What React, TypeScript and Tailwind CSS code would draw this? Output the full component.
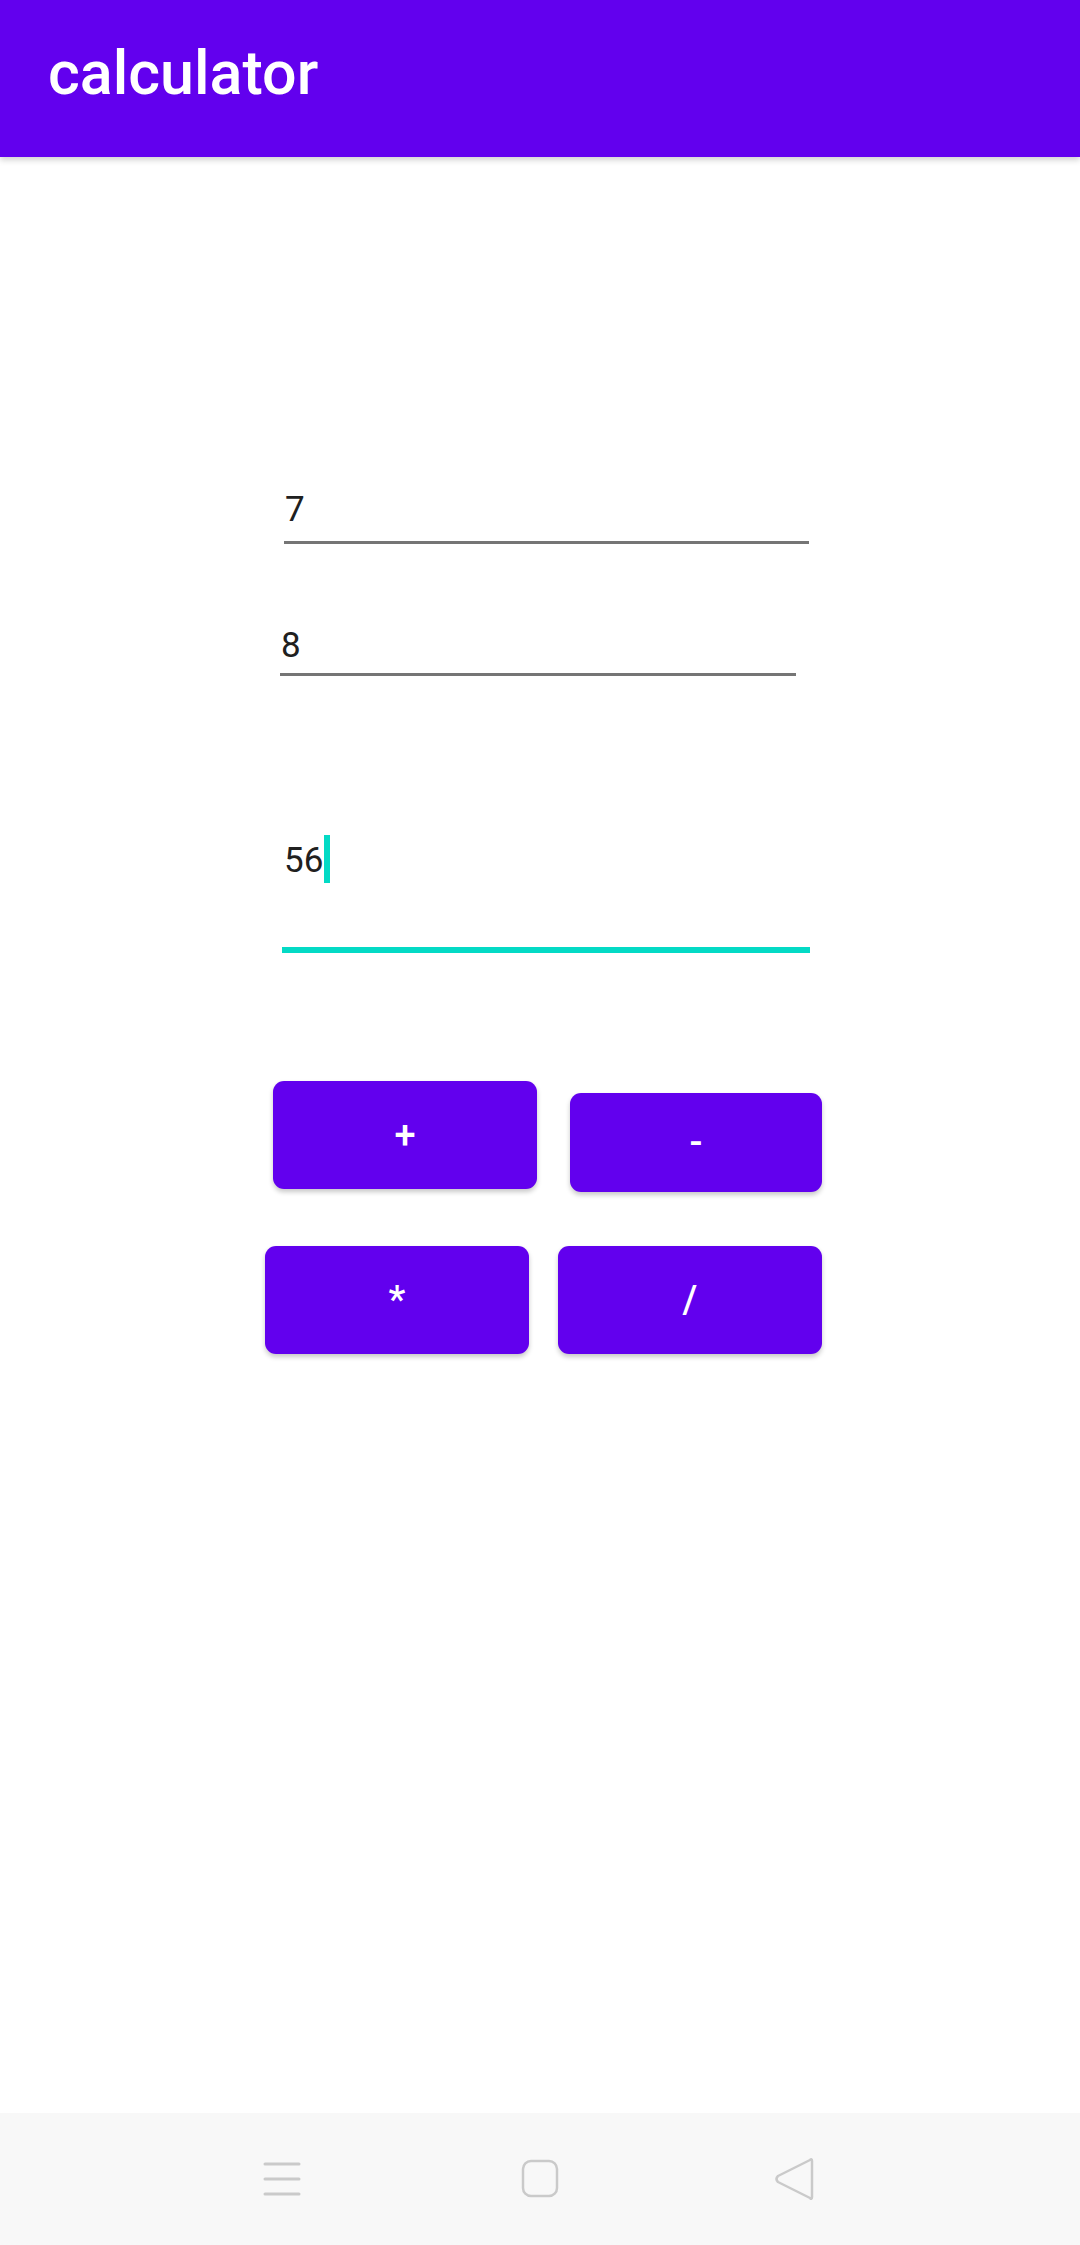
import React from "react";

export default function App() {
  const font = { fontFamily: "Roboto, 'Noto Sans', sans-serif" };
  return (
    <div className="w-[1080px] h-[2245px] bg-white flex flex-col overflow-hidden" style={font}>
      <header className="h-[157px] shrink-0 bg-[#6200ee] shadow-[0_3px_6px_rgba(0,0,0,0.18)] relative z-10 flex items-start">
        <h1 className="ml-[48px] mt-[33px] text-[61px] leading-[80px] font-medium text-white">calculator</h1>
      </header>

      <main className="flex-1 flex flex-col">
        <div className="ml-[284px] w-[525px] mt-[333px] pb-[11px] border-b-[3px] border-[#757575]">
          <div className="text-[35px] leading-[40px] text-[#202020] pl-[1px]">7</div>
        </div>

        <div className="ml-[280px] w-[516px] mt-[82px] pb-[7px] border-b-[3px] border-[#757575]">
          <div className="text-[35px] leading-[40px] text-[#202020] pl-[1px]">8</div>
        </div>

        <div className="ml-[282px] w-[528px] mt-[165px] pb-[66px] border-b-[6px] border-[#03dac5]">
          <div className="h-[40px] flex items-center text-[35px] leading-[40px] text-[#202020] pl-[2px]">
            <span>56</span>
            <span className="inline-block w-[6px] h-[48px] bg-[#03dac5] ml-[1px] -mt-[4px]" />
          </div>
        </div>

        <div className="flex items-start mt-[128px] ml-[273px] gap-[33px]">
          <button className="w-[264px] h-[108px] rounded-[11px] bg-[#6200ee] text-white text-[38px] font-medium shadow-[0_3px_5px_rgba(0,0,0,0.22)] flex items-center justify-center">
            +
          </button>
          <button className="mt-[12px] w-[252px] h-[99px] rounded-[11px] bg-[#6200ee] text-white text-[38px] font-medium shadow-[0_3px_5px_rgba(0,0,0,0.22)] flex items-center justify-center">
            -
          </button>
        </div>

        <div className="flex items-start mt-[54px] ml-[265px] gap-[29px]">
          <button className="w-[264px] h-[108px] rounded-[11px] bg-[#6200ee] text-white text-[38px] font-medium shadow-[0_3px_5px_rgba(0,0,0,0.22)] flex items-center justify-center">
            *
          </button>
          <button className="w-[264px] h-[108px] rounded-[11px] bg-[#6200ee] text-white text-[38px] font-medium shadow-[0_3px_5px_rgba(0,0,0,0.22)] flex items-center justify-center">
            /
          </button>
        </div>
      </main>

      <nav className="h-[132px] shrink-0 bg-[#f8f8f8] flex items-center">
        <svg className="ml-[262px]" width="40" height="40" viewBox="0 0 40 40">
          <g stroke="#cacaca" strokeWidth="3" strokeLinecap="round">
            <line x1="3" y1="5" x2="37" y2="5" />
            <line x1="3" y1="20" x2="37" y2="20" />
            <line x1="3" y1="35" x2="37" y2="35" />
          </g>
        </svg>
        <svg className="ml-[218px]" width="40" height="40" viewBox="0 0 40 40">
          <rect x="3" y="2" width="34" height="35" rx="8" fill="none" stroke="#cacaca" strokeWidth="2.5" />
        </svg>
        <svg className="ml-[214px]" width="42" height="44" viewBox="0 0 42 44">
          <path d="M38 4 Q38 1 36 3 L4 19 Q1 22 4 25 L36 41 Q38 43 38 40 Z" fill="none" stroke="#cacaca" strokeWidth="2.5" strokeLinejoin="round" />
        </svg>
      </nav>
    </div>
  );
}
